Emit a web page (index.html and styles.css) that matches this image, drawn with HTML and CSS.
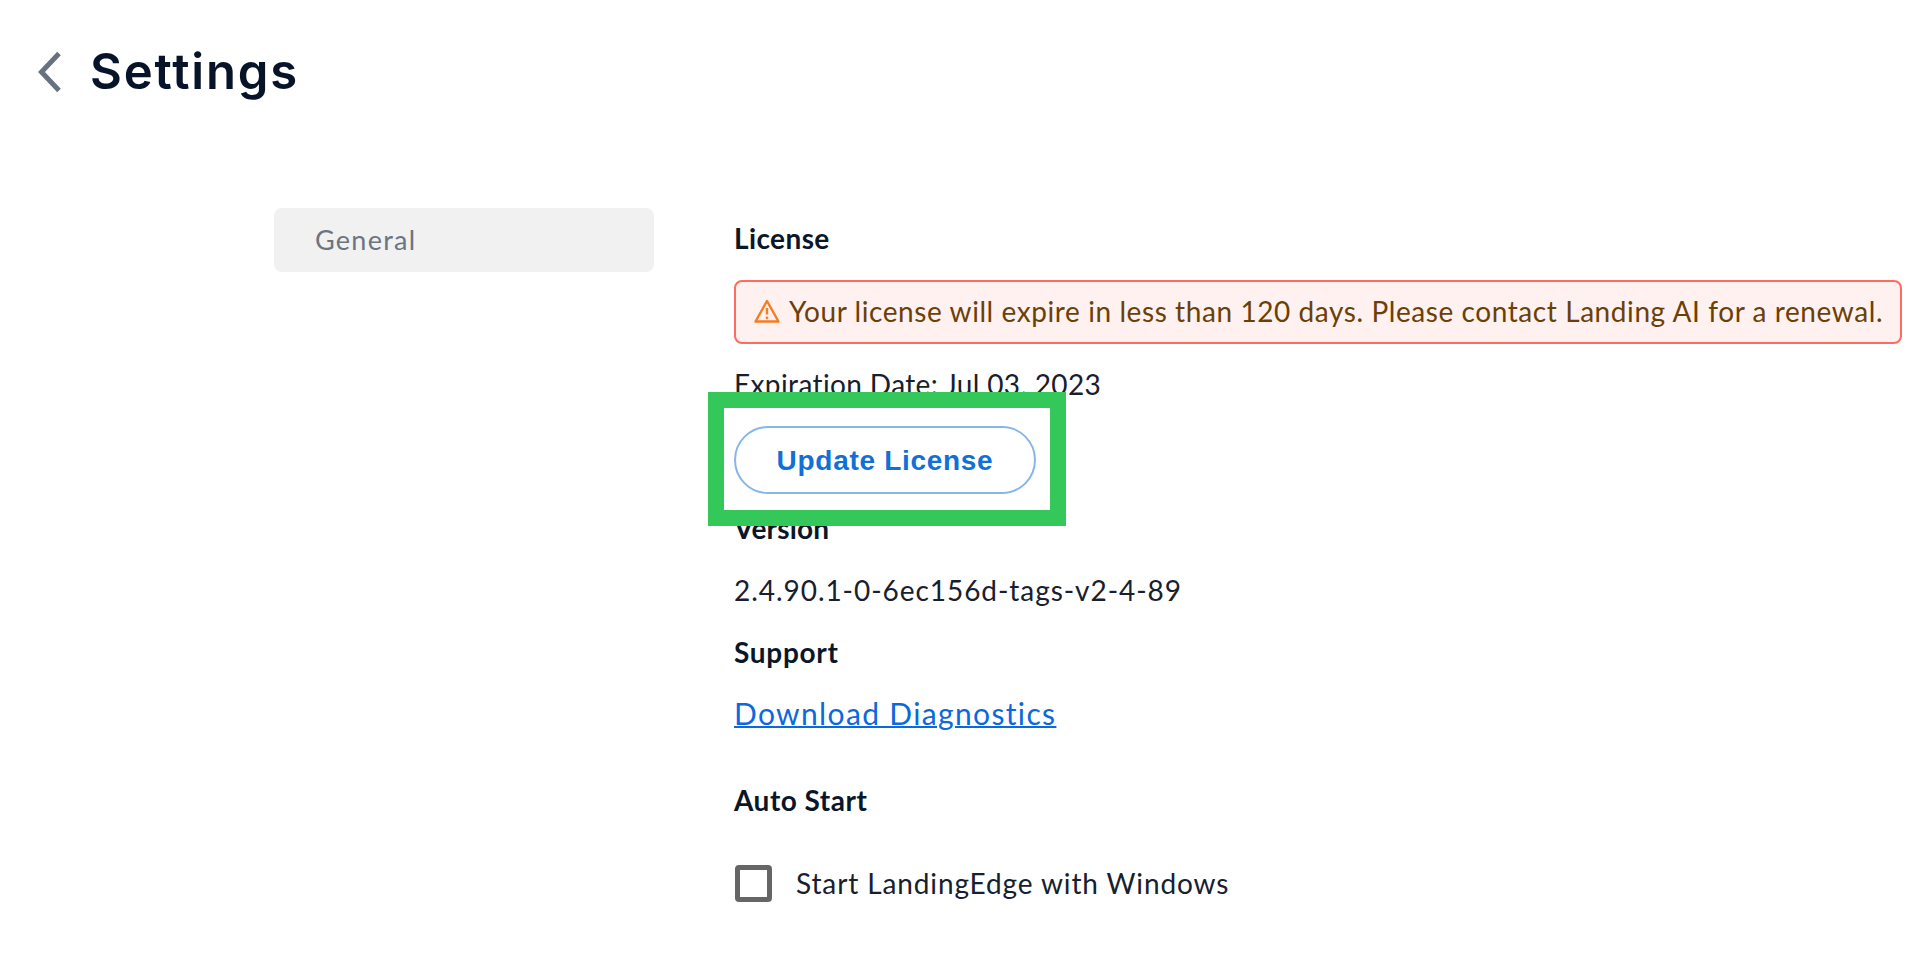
FILE: index.html
```html
<!DOCTYPE html>
<html lang="en">
<head>
<meta charset="utf-8">
<title>Settings</title>
<link rel="stylesheet" href="styles.css">
</head>
<body>
<header class="topbar">
  <svg class="back" width="24" height="42" viewBox="0 0 24 42" aria-hidden="true"><path d="M21 2.500 L3.500 21 L21 39.500" fill="none" stroke="#68727e" stroke-width="5"/></svg>
  <h1 class="title">Settings</h1>
</header>
<main class="layout">
  <nav class="sidebar"><div class="nav-item">General</div></nav>
  <section class="content">
    <h2 class="heading">License</h2>
    <div class="alert">
      <svg class="alert-icon" width="26" height="24" viewBox="0 0 26 24" aria-hidden="true"><path d="M13 2 L24.500 22.500 H1.500 Z" fill="none" stroke="#f57c1f" stroke-width="2.400" stroke-linejoin="round"/><path d="M13 9 V15.500" stroke="#f57c1f" stroke-width="2.400"/><circle cx="13" cy="18.800" r="1.400" fill="#f57c1f"/></svg>
      <span>Your license will expire in less than 120 days. Please contact Landing AI for a renewal.</span>
    </div>
    <p class="text expiry">Expiration Date: Jul 03, 2023</p>
    <div class="action">
      <button class="pill" type="button"><span class="pill-label">Update License</span></button>
    </div>
    <h2 class="heading version">Version</h2>
    <p class="text build">2.4.90.1-0-6ec156d-tags-v2-4-89</p>
    <h2 class="heading support">Support</h2>
    <p class="text download"><a class="link" href="#">Download Diagnostics</a></p>
    <h2 class="heading autostart">Auto Start</h2>
    <label class="check-row"><span class="checkbox"></span><span>Start LandingEdge with Windows</span></label>
  </section>
</main>
</body>
</html>
```
FILE: styles.css
```css
*, *::before { box-sizing: border-box; }
html, body { margin: 0; height: 100%; background: #fff; overflow: hidden; }
body { font-family: "Lato", "Open Sans", sans-serif; color: #0b1628; }
.topbar { display: flex; align-items: center; height: 104px; padding: 39px 0 0 38px; gap: 28px; }
.back { flex: none; }
.title { margin: 0; font-family: "Inter", sans-serif; font-size: 49px; font-weight: 600; letter-spacing: 1.85px; line-height: 56px; color: #061329; }
.layout { display: flex; margin-top: 104px; padding-left: 274px; }
.sidebar { width: 380px; flex: none; margin-right: 80px; }
.nav-item { height: 64px; padding-left: 41px; line-height: 63px; font-size: 27px; color: #6c757f; background: #f1f1f1; border-radius: 8px; letter-spacing: 1.25px; }
.content { width: 1168px; flex: none; margin-top: 10px; }
.heading { margin: 0; font-size: 28px; font-weight: 700; line-height: 40px; letter-spacing: .4px; color: #0b1628; }
.text { margin: 21px 0 0; font-size: 28px; line-height: 40px; color: #17202e; }
.expiry { margin-top: 20px; letter-spacing: .38px; }
.alert { display: flex; align-items: center; gap: 9px; height: 64px; margin-top: 22px; padding: 0 0 2px 18px; font-size: 28px; letter-spacing: .58px; color: #6b4007; background: #fff1f0; border: 2px solid #ff6b61; border-radius: 8px; white-space: nowrap; }
.alert-icon { flex: none; }
.action { position: relative; height: 68px; margin-top: 22px; }
.action::before { content: ""; position: absolute; inset: -34px auto -32px -26px; width: 358px; background: #fff; border: 16px solid #34c759; }
.pill { position: relative; width: 302px; height: 68px; padding: 2px 0 0; font-family: "Liberation Sans", sans-serif; font-size: 28px; font-weight: 700; letter-spacing: .7px; color: #1070d8; background: #fff; border: 2px solid #86b6ea; border-radius: 34px; }
.version { margin-top: 14px; letter-spacing: .2px; }
.build { margin-top: 22px; letter-spacing: .95px; }
.support { margin-top: 22px; letter-spacing: .7px; }
.download { margin-top: 21px; font-size: 30px; letter-spacing: 1.35px; }
.link { color: #0b68dd; text-decoration-thickness: 2px; }
.autostart { margin-top: 47px; letter-spacing: .5px; }
.check-row { display: flex; align-items: center; gap: 24px; margin-top: 44px; font-size: 28px; letter-spacing: .88px; color: #17202e; }
.checkbox { width: 37px; height: 37px; flex: none; margin: 1px 0 0 1px; border: 5px solid #666; border-radius: 4px; }
```
